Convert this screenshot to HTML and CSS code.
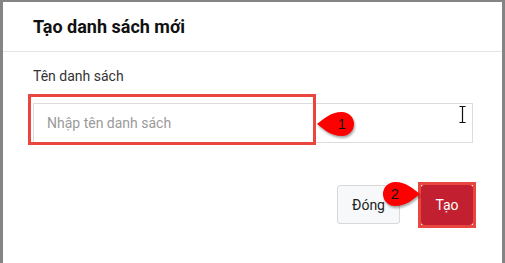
FILE: index.html
```html
<!DOCTYPE html>
<html lang="vi">
<head>
    <meta charset="UTF-8">
    <meta name="viewport" content="width=device-width, initial-scale=1.0">
    <title>Tạo danh sách mới</title>
    <link rel="stylesheet" href="styles.css">
</head>
<body>
    <div class="modal">
        <div class="modal-header">
            <h2>Tạo danh sách mới</h2>
        </div>
        <div class="modal-body">
            <label class="field-label" for="list-name">Tên danh sách</label>
            <div class="field">
                <input id="list-name" class="field-input" type="text" placeholder="Nhập tên danh sách">
                <span class="mark mark-input"></span>
                <svg class="ibeam" width="7" height="17" viewBox="0 0 7 17">
                    <path d="M0.5 0.5h6M0.5 16.5h6M3.5 0.5v16" stroke="#111" stroke-width="1.2" fill="none"/>
                </svg>
                <div class="badge badge-one">
                    <svg width="40" height="26" viewBox="0 0 40 26">
                        <path d="M1 13 C8 8, 14 1, 26 1 A12 12 0 1 1 26 25 C14 25, 8 18, 1 13 Z" fill="#ff0000"/>
                    </svg>
                    <span>1</span>
                </div>
            </div>
        </div>
        <div class="modal-footer">
            <button class="btn btn-close">Đóng</button>
            <div class="btn-wrap">
                <button class="btn btn-primary">Tạo</button>
                <span class="mark mark-button"></span>
                <div class="badge badge-two">
                    <svg width="40" height="26" viewBox="0 0 40 26">
                        <path d="M39 13 C32 8, 26 1, 14 1 A12 12 0 1 0 14 25 C26 25, 32 18, 39 13 Z" fill="#ff0000"/>
                    </svg>
                    <span>2</span>
                </div>
            </div>
        </div>
    </div>
</body>
</html>
```

FILE: styles.css
```css
body {
    background-color: #848484;
    margin: 0;
    padding: 2px 3px 0 3px;
    height: 263px;
    box-sizing: border-box;
    overflow: hidden;
    font-family: Roboto, 'Liberation Sans', sans-serif;
    color: #222;
}

.modal {
    background-color: #fff;
    height: 100%;
}

.modal-header {
    padding: 13px 30px 12px;
    border-bottom: 1px solid #e5e5e5;
}

.modal-header h2 {
    margin: 0;
    font-size: 18px;
    line-height: 24px;
    font-weight: 700;
    color: #111;
}

.modal-body {
    padding: 14px 29px 0 30px;
}

.field-label {
    display: block;
    font-size: 14px;
    line-height: 20px;
    color: #333;
    margin-bottom: 17px;
}

.field {
    position: relative;
}

.field-input {
    display: block;
    width: 100%;
    height: 40px;
    box-sizing: border-box;
    border: 1px solid #dcdcdc;
    border-radius: 0;
    padding: 0 13px;
    font-family: Roboto, 'Liberation Sans', sans-serif;
    font-size: 14px;
    color: #333;
    outline: none;
}

.field-input::placeholder {
    color: #9a9a9a;
}

.mark {
    position: absolute;
    border: 3px solid #e8463f;
    box-sizing: border-box;
    pointer-events: none;
}

.mark-input {
    left: -5px;
    top: -9px;
    width: 288px;
    height: 51px;
}

.ibeam {
    position: absolute;
    left: 426px;
    top: 3px;
}

.badge {
    position: absolute;
    width: 40px;
    height: 26px;
    filter: drop-shadow(1px 2px 1px rgba(0, 0, 0, 0.35));
}

.badge svg {
    display: block;
}

.badge span {
    position: absolute;
    top: 4px;
    font-family: 'Liberation Sans', Arial, sans-serif;
    font-size: 15px;
    line-height: 18px;
    color: #111;
}

.badge-one {
    left: 283px;
    top: 8px;
}

.badge-one span {
    left: 22px;
}

.badge-two {
    left: -40px;
    top: -4px;
}

.badge-two span {
    left: 10px;
}

.modal-footer {
    display: flex;
    justify-content: flex-end;
    align-items: flex-start;
    gap: 21px;
    padding: 42px 29px 0 30px;
}

.btn {
    font-family: Roboto, 'Liberation Sans', sans-serif;
    font-size: 14px;
    height: 40px;
    border-radius: 3px;
    cursor: pointer;
}

.btn-close {
    width: 63px;
    height: 39px;
    background-color: #f7f8fa;
    border: 1px solid #d8d8d8;
    color: #222;
}

.btn-wrap {
    position: relative;
}

.btn-primary {
    display: block;
    width: 52px;
    background-color: #c21f30;
    border: none;
    color: #fff;
}

.mark-button {
    left: -3px;
    top: -3px;
    width: 58px;
    height: 46px;
}
```
